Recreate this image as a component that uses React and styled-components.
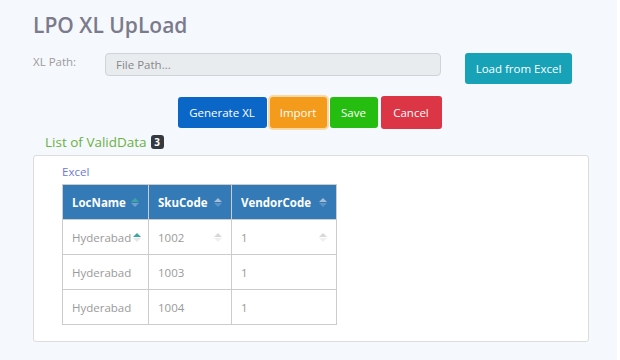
import React from 'react';
import styled, { createGlobalStyle } from 'styled-components';

const GlobalStyle = createGlobalStyle`
  html, body {
    margin: 0;
    padding: 0;
    background: #ffffff;
  }
  body {
    font-family: "Open Sans", "Liberation Sans", sans-serif;
  }
`;

const StyledPage = styled.main`
  width: 617px;
  min-height: 360px;
  box-sizing: border-box;
  background: #f5f8fd;
  padding: 11px 28px 0 33px;
`;

const StyledTitle = styled.h1`
  margin: 0;
  font-size: 21px;
  font-weight: 600;
  line-height: 28px;
  color: #7b7b8b;
`;

const StyledFormRow = styled.div`
  display: flex;
  align-items: flex-start;
  margin-top: 14px;
`;

const StyledLabel = styled.label`
  width: 72px;
  font-size: 11.5px;
  line-height: 18px;
  color: #9b9b9b;
`;

const StyledInput = styled.input`
  width: 336px;
  height: 23px;
  box-sizing: border-box;
  border: 1px solid #ced4da;
  border-radius: 4px;
  background: #e9ecef;
  padding: 0 10px;
  font-family: inherit;
  font-size: 11.5px;
  color: #495057;

  &::placeholder {
    color: #888;
  }
`;

const COLORS = {
  info: '#17a2b8',
  primary: '#0b67c7',
  warning: '#f59b1b',
  success: '#25bd10',
  danger: '#dc3545',
};

const StyledButton = styled.button`
  border: none;
  border-radius: 3px;
  background: ${({ $variant }) => COLORS[$variant]};
  color: #fff;
  font-family: inherit;
  font-size: 11.5px;
  height: ${({ $h }) => $h || 31}px;
  width: ${({ $w }) => $w}px;
  padding: 0;
  box-shadow: ${({ $focus }) => ($focus ? '0 0 0 2px #fbd9a4' : 'none')};
  cursor: pointer;
`;

const StyledLoadButton = styled(StyledButton)`
  margin-left: 24px;
`;

const StyledActions = styled.div`
  display: flex;
  justify-content: center;
  align-items: center;
  gap: 3px;
  margin-top: 12px;
  margin-right: -2px;
  margin-left: -5px;
`;

const StyledListHeading = styled.div`
  display: flex;
  align-items: center;
  gap: 4px;
  margin: 5px 0 0 12px;
  font-size: 13.5px;
  line-height: 16px;
  color: #6cb043;
`;

const StyledBadge = styled.span`
  display: inline-flex;
  align-items: center;
  justify-content: center;
  width: 13px;
  height: 14px;
  border-radius: 3px;
  background: #343a40;
  color: #fff;
  font-size: 10px;
  font-weight: 700;
`;

const StyledCard = styled.section`
  margin-top: 5px;
  width: 556px;
  height: 187px;
  box-sizing: border-box;
  background: #fff;
  border: 1px solid #dcdcdc;
  border-radius: 3px;
  padding: 8px 28px;
`;

const StyledCaption = styled.div`
  font-size: 11.5px;
  line-height: 16px;
  color: #6d78d8;
  margin-bottom: 4px;
`;

const StyledTable = styled.table`
  border-collapse: collapse;
  font-size: 11.5px;

  th, td {
    border: 1px solid #cccccc;
    height: 34px;
    padding: 0 9px;
    text-align: left;
  }

  th {
    background: #337ab7;
    color: #fff;
    font-weight: 700;
  }

  td {
    color: #9a9a9a;
  }
`;

const StyledCellInner = styled.div`
  display: flex;
  align-items: center;
  justify-content: space-between;
  width: ${({ $w }) => $w}px;
`;

const StyledSort = styled.span`
  display: inline-flex;
  flex-direction: column;
  gap: 1px;
  margin-left: 2px;
`;

const StyledArrow = styled.span`
  width: 0;
  height: 0;
  border-left: 4px solid transparent;
  border-right: 4px solid transparent;
  ${({ $down, $color }) =>
    $down
      ? `border-top: 4px solid ${$color};`
      : `border-bottom: 4px solid ${$color};`}
`;

const SortIcon = ({ up, down }) => (
  <StyledSort>
    <StyledArrow $color={up} />
    <StyledArrow $down $color={down} />
  </StyledSort>
);

const columns = [
  { key: 'loc', label: 'LocName', w: 67, up: '#3aa6a6', down: '#6fa0cc' },
  { key: 'sku', label: 'SkuCode', w: 64, up: '#a6bdd6', down: '#5f93c4' },
  { key: 'vendor', label: 'VendorCode', w: 86, up: '#a6bdd6', down: '#5f93c4' },
];

const rows = [
  { loc: 'Hyderabad', sku: '1002', vendor: '1' },
  { loc: 'Hyderabad', sku: '1003', vendor: '1' },
  { loc: 'Hyderabad', sku: '1004', vendor: '1' },
];

const App = () => (
  <>
    <GlobalStyle />
    <StyledPage>
      <StyledTitle>LPO XL UpLoad</StyledTitle>
      <StyledFormRow>
        <StyledLabel>XL Path:</StyledLabel>
        <StyledInput placeholder="File Path..." />
        <StyledLoadButton $variant="info" $w={107}>Load from Excel</StyledLoadButton>
      </StyledFormRow>
      <StyledActions>
        <StyledButton $variant="primary" $w={89}>Generate XL</StyledButton>
        <StyledButton $variant="warning" $w={57} $focus>Import</StyledButton>
        <StyledButton $variant="success" $w={48}>Save</StyledButton>
        <StyledButton $variant="danger" $w={61} $h={33}>Cancel</StyledButton>
      </StyledActions>
      <StyledListHeading>
        List of ValidData <StyledBadge>3</StyledBadge>
      </StyledListHeading>
      <StyledCard>
        <StyledCaption>Excel</StyledCaption>
        <StyledTable>
          <thead>
            <tr>
              {columns.map((c) => (
                <th key={c.key}>
                  <StyledCellInner $w={c.w}>
                    {c.label}
                    <SortIcon up={c.up} down={c.down} />
                  </StyledCellInner>
                </th>
              ))}
            </tr>
          </thead>
          <tbody>
            {rows.map((r, i) => (
              <tr key={r.sku}>
                {columns.map((c, j) => (
                  <td key={c.key}>
                    <StyledCellInner $w={c.w}>
                      {r[c.key]}
                      {i === 0 && (
                        <SortIcon
                          up={j === 0 ? '#3aa6a6' : '#d8d8d8'}
                          down={j === 0 ? '#e6e6e6' : '#f0f0f0'}
                        />
                      )}
                    </StyledCellInner>
                  </td>
                ))}
              </tr>
            ))}
          </tbody>
        </StyledTable>
      </StyledCard>
    </StyledPage>
  </>
);

export default App;
